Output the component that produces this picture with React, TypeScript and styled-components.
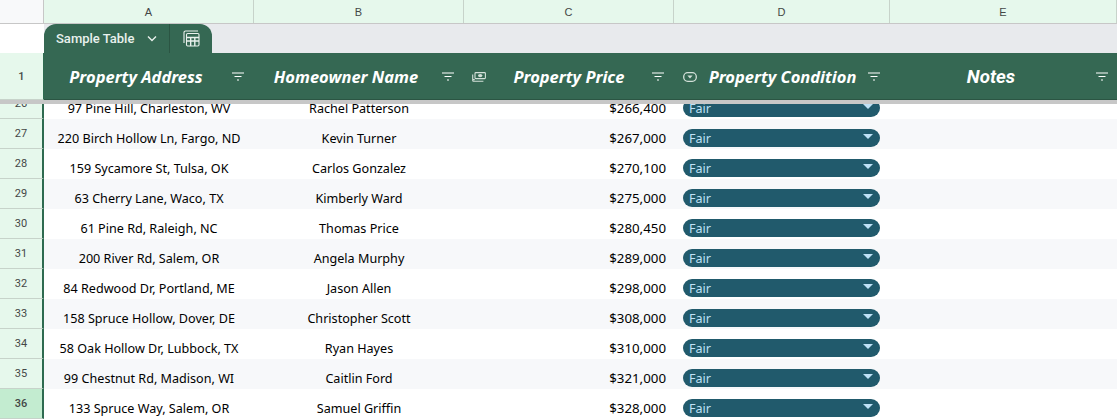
import React from 'react'
import styled, { createGlobalStyle } from 'styled-components'

const GlobalStyle = createGlobalStyle`
  html, body {
    margin: 0;
    padding: 0;
    background: #fff;
    overflow: hidden;
  }
`

const Sheet = styled.div`
  width: 1117px;
  height: 419px;
  overflow: hidden;
  display: flex;
  flex-direction: column;
  font-family: 'Noto Sans', 'Liberation Sans', sans-serif;
`

const ColumnBar = styled.div`
  display: flex;
  height: 24px;
  flex: none;
  box-sizing: border-box;
  border-bottom: 1px solid #c7c7c7;
`

const Corner = styled.div`
  width: 44px;
  flex: none;
  box-sizing: border-box;
  background: #f8f9fa;
  border-right: 1px solid #c7c7c7;
`

const ColumnLetter = styled.div<{ $w: number }>`
  width: ${(p) => p.$w}px;
  flex: none;
  box-sizing: border-box;
  background: #e6f8ec;
  border-right: 1px solid #c7d3ca;
  display: flex;
  align-items: center;
  justify-content: center;
  font: 400 11px 'Liberation Sans', sans-serif;
  color: #444746;
`

const TabBand = styled.div`
  display: flex;
  height: 29px;
  flex: none;
  background: #e8eaed;
`

const TabGutter = styled.div`
  width: 44px;
  flex: none;
  background: #fff;
`

const Tab = styled.div`
  display: flex;
  width: 168px;
  height: 29px;
  background: #356853;
  border-radius: 12px 12px 0 0;
  color: #e9f1ed;
`

const TabName = styled.div`
  width: 126px;
  box-sizing: border-box;
  padding: 0 0 0 12px;
  display: flex;
  align-items: center;
  gap: 12px;
  font-family: 'Roboto', sans-serif;
  font-size: 13px;
  font-weight: 500;
  border-right: 1px solid #2b5543;
`

const TabIcon = styled.div`
  flex: 1;
  display: flex;
  align-items: center;
  justify-content: center;
`

const HeaderRow = styled.div`
  display: flex;
  height: 47px;
  flex: none;
`

const RowNumber = styled.div<{ $active?: boolean }>`
  width: 44px;
  flex: none;
  box-sizing: border-box;
  background: ${(p) => (p.$active ? '#c3ecd0' : '#e6f8ec')};
  border-bottom: 1px solid #c7d3ca;
  border-right: 2px solid #2e6b50;
  display: flex;
  align-items: center;
  justify-content: center;
  font: 400 11px 'Roboto', sans-serif;
  font-weight: ${(p) => (p.$active ? 500 : 400)};
  color: #444746;
`

const HeaderNumber = styled(RowNumber)`
  font-weight: 500;
  border-right: 1px solid #2e6b50;
`

const HeaderCell = styled.div<{ $w: number }>`
  width: ${(p) => p.$w}px;
  flex: none;
  box-sizing: border-box;
  background: #356853;
  border-bottom: 1px solid #2b5543;
  display: flex;
  align-items: center;
  padding: 1px 10px 0 0;
  color: #fff;

  &:last-child {
    padding-right: 9px;
  }
`

const HeaderTitle = styled.div<{ $shift?: number }>`
  flex: 1;
  text-align: center;
  padding-right: ${(p) => p.$shift ?? 0}px;
  font-family: 'Noto Sans', sans-serif;
  font-size: 16.5px;
  font-weight: 700;
  font-style: italic;
  white-space: nowrap;
`

const NotesTitle = styled(HeaderTitle)`
  font-family: 'Roboto', sans-serif;
  font-size: 18.7px;
`

const TypeIcon = styled.span<{ $left: number }>`
  display: flex;
  flex: none;
  margin-left: ${(p) => p.$left}px;
  color: #d3e0d9;
`

const Body = styled.div`
  position: relative;
  flex: 1;
  min-height: 0;
  overflow: hidden;
`

const FrozenShadow = styled.div`
  position: absolute;
  top: 0;
  left: 0;
  right: 0;
  height: 4px;
  background: #c7c7c7;
`

const Rows = styled.div`
  margin-top: -11px;
`

const Row = styled.div`
  display: flex;
  height: 30px;
`

const Cell = styled.div<{ $w: number; $even: boolean; $right?: boolean }>`
  width: ${(p) => p.$w}px;
  flex: none;
  box-sizing: border-box;
  background: ${(p) => (p.$even ? '#f7f8fa' : '#fff')};
  display: flex;
  align-items: flex-end;
  justify-content: ${(p) => (p.$right ? 'flex-end' : 'center')};
  padding: ${(p) => (p.$right ? '0 8px 2px 0' : '0 0 1px')};
  font-size: ${(p) => (p.$right ? 13.3 : 12.6)}px;
  line-height: 18px;
  color: #000;
  white-space: nowrap;
`

const ChipCell = styled(Cell)`
  justify-content: flex-start;
  padding: 0 0 2px 9px;
`

const Chip = styled.div`
  width: 197px;
  height: 18px;
  box-sizing: border-box;
  border-radius: 9px;
  background: #215a6c;
  color: #bfe1f6;
  display: flex;
  align-items: center;
  justify-content: space-between;
  padding: 1px 7px 0 6px;
  font-size: 12.6px;
`

const ChipArrow = styled.span`
  width: 0;
  height: 0;
  margin-top: -4px;
  border-left: 5px solid transparent;
  border-right: 5px solid transparent;
  border-top: 5px solid #bfe1f6;
`

const FilterIcon = () => (
  <svg width="12" height="9" viewBox="0 0 12 9" fill="none" stroke="#fff" strokeWidth="1">
    <path d="M0 1h12M2.5 4.5h7M5 8h2" />
  </svg>
)

const CashIcon = () => (
  <svg width="14" height="10" viewBox="0 0 14 10" fill="none" stroke="currentColor" strokeWidth="1.1">
    <rect x="3" y="0.6" width="10.4" height="6" rx="0.8" />
    <ellipse cx="8.2" cy="3.6" rx="2.2" ry="1.7" fill="currentColor" stroke="none" />
    <path d="M0.7 2.4v6.2a0.7 0.7 0 0 0 0.7 0.7h10M0.7 7.6h2" />
  </svg>
)

const DropdownIcon = () => (
  <svg width="14" height="10" viewBox="0 0 14 10" fill="none" stroke="currentColor" strokeWidth="1.3">
    <rect x="0.7" y="0.7" width="12.6" height="8.6" rx="4" />
    <path d="M4.4 3.6h5.2L7 6.6z" fill="currentColor" stroke="none" />
  </svg>
)

const ChevronIcon = () => (
  <svg width="12" height="8" viewBox="0 0 12 8" fill="none" stroke="#e9f1ed" strokeWidth="1.4">
    <path d="M2 1.5l4 4 4-4" />
  </svg>
)

const CalcIcon = () => (
  <svg width="17" height="17" viewBox="0 0 17 17" fill="none" stroke="#e9f1ed" strokeWidth="1.1">
    <path d="M15 1H2.5A1.5 1.5 0 0 0 1 2.5V13" />
    <rect x="3.5" y="3.5" width="12.5" height="12.5" rx="1.2" />
    <path d="M3.5 7.5h12.5M3.5 11h12.5M7.7 7.5V16M11.8 7.5V16" strokeWidth="1.4" />
  </svg>
)

const columns = [
  { letter: 'A', width: 210 },
  { letter: 'B', width: 210 },
  { letter: 'C', width: 210 },
  { letter: 'D', width: 216 },
  { letter: 'E', width: 227 },
]

const data = [
  [26, '97 Pine Hill, Charleston, WV', 'Rachel Patterson', '$266,400'],
  [27, '220 Birch Hollow Ln, Fargo, ND', 'Kevin Turner', '$267,000'],
  [28, '159 Sycamore St, Tulsa, OK', 'Carlos Gonzalez', '$270,100'],
  [29, '63 Cherry Lane, Waco, TX', 'Kimberly Ward', '$275,000'],
  [30, '61 Pine Rd, Raleigh, NC', 'Thomas Price', '$280,450'],
  [31, '200 River Rd, Salem, OR', 'Angela Murphy', '$289,000'],
  [32, '84 Redwood Dr, Portland, ME', 'Jason Allen', '$298,000'],
  [33, '158 Spruce Hollow, Dover, DE', 'Christopher Scott', '$308,000'],
  [34, '58 Oak Hollow Dr, Lubbock, TX', 'Ryan Hayes', '$310,000'],
  [35, '99 Chestnut Rd, Madison, WI', 'Caitlin Ford', '$321,000'],
  [36, '133 Spruce Way, Salem, OR', 'Samuel Griffin', '$328,000'],
] as const

const App: React.FC = () => {
  return (
    <Sheet>
      <GlobalStyle />
      <ColumnBar>
        <Corner />
        {columns.map((c) => (
          <ColumnLetter key={c.letter} $w={c.width}>
            {c.letter}
          </ColumnLetter>
        ))}
      </ColumnBar>
      <TabBand>
        <TabGutter />
        <Tab>
          <TabName>
            Sample Table
            <ChevronIcon />
          </TabName>
          <TabIcon>
            <CalcIcon />
          </TabIcon>
        </Tab>
      </TabBand>
      <HeaderRow>
        <HeaderNumber>1</HeaderNumber>
        <HeaderCell $w={210}>
          <HeaderTitle $shift={4}>Property Address</HeaderTitle>
          <FilterIcon />
        </HeaderCell>
        <HeaderCell $w={210}>
          <HeaderTitle $shift={4}>Homeowner Name</HeaderTitle>
          <FilterIcon />
        </HeaderCell>
        <HeaderCell $w={210}>
          <TypeIcon $left={8}>
            <CashIcon />
          </TypeIcon>
          <HeaderTitle>Property Price</HeaderTitle>
          <FilterIcon />
        </HeaderCell>
        <HeaderCell $w={216}>
          <TypeIcon $left={9}>
            <DropdownIcon />
          </TypeIcon>
          <HeaderTitle>Property Condition</HeaderTitle>
          <FilterIcon />
        </HeaderCell>
        <HeaderCell $w={227}>
          <NotesTitle $shift={4}>Notes</NotesTitle>
          <FilterIcon />
        </HeaderCell>
      </HeaderRow>
      <Body>
        <Rows>
          {data.map(([n, address, owner, price]) => {
            const even = n % 2 === 1
            return (
              <Row key={n}>
                <RowNumber $active={n === 36}>{n}</RowNumber>
                <Cell $w={210} $even={even}>
                  {address}
                </Cell>
                <Cell $w={210} $even={even}>
                  {owner}
                </Cell>
                <Cell $w={210} $even={even} $right>
                  {price}
                </Cell>
                <ChipCell $w={216} $even={even}>
                  <Chip>
                    Fair
                    <ChipArrow />
                  </Chip>
                </ChipCell>
                <Cell $w={227} $even={even} />
              </Row>
            )
          })}
        </Rows>
        <FrozenShadow />
      </Body>
    </Sheet>
  )
}

export default App
